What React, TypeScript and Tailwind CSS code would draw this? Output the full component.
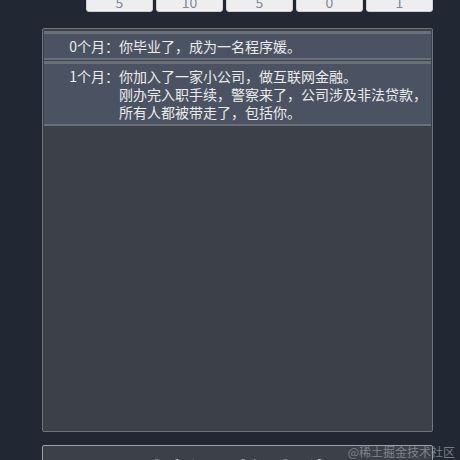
import React from "react";

const stats = ["5", "10", "5", "0", "1"];

const entries: { label: string; lines: string[] }[] = [
  { label: "0个月：", lines: ["你毕业了，成为一名程序媛。"] },
  {
    label: "1个月：",
    lines: [
      "你加入了一家小公司，做互联网金融。",
      "刚办完入职手续，警察来了，公司涉及非法贷款，",
      "所有人都被带走了，包括你。",
    ],
  },
];

export default function App() {
  return (
    <div
      className="relative w-[460px] h-[460px] overflow-hidden bg-[#222833]"
      style={{ fontFamily: '"Noto Sans CJK SC", "Noto Sans", sans-serif' }}
    >
      <div className="flex gap-[3px] pl-[86px] -mt-[8px]">
        {stats.map((s, i) => (
          <div
            key={i}
            className="w-[67px] h-[20px] bg-[#eeeeee] rounded-b-[3px] border border-[#d0d0d0] flex items-center justify-center text-[14px] leading-none text-[#7d8a99]"
          >
            {s}
          </div>
        ))}
      </div>

      <div className="ml-[42px] mt-[16px] w-[391px] h-[404px] bg-[#3c4049] border border-[#70747b] rounded-[2px] pt-[2px] px-[1px] flex flex-col gap-[1px]">
        {entries.map((e, i) => (
          <div
            key={i}
            className="flex bg-[#4b5362] border-t-[3px] border-b-[2px] border-[#6b6f77] py-[3px] text-[14px] leading-[18px] text-[#ebebeb]"
          >
            <div className="w-[75px] shrink-0 text-right">{e.label}</div>
            <div className="flex flex-col">
              {e.lines.map((l, j) => (
                <div key={j}>{l}</div>
              ))}
            </div>
          </div>
        ))}
      </div>

      <div className="ml-[42px] mt-[13px] w-[391px] h-[40px] bg-[#3c4049] border border-[#9a9ea5] rounded-[2px] flex justify-center pt-[10px]">
        <span className="text-[28px] leading-[32px] font-bold text-white tracking-[6px]">
          重新开始人生
        </span>
      </div>

      <div className="absolute right-[5px] top-[445px] text-[12px] leading-[14px] text-[#9aa0a8] opacity-70">
        @稀土掘金技术社区
      </div>
    </div>
  );
}
